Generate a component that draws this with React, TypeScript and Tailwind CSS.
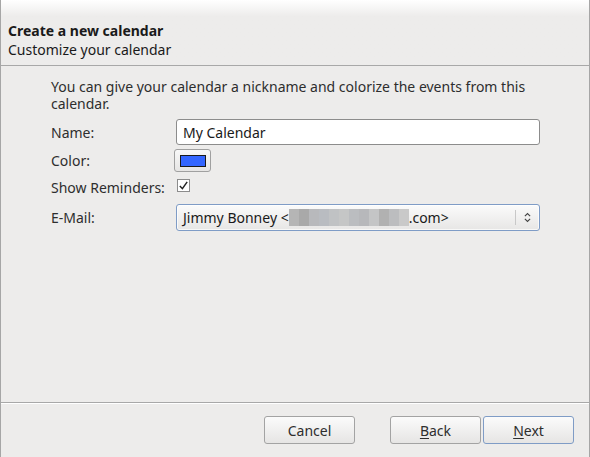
export default function App() {
  const font = { fontFamily: '"Noto Sans", "DejaVu Sans", sans-serif' };
  const blur = ["#b5b5b5", "#a9a9a9", "#b8b9bc", "#b9bcc1", "#c0c2c4", "#c5c6c6", "#bbbdc0", "#b7b8bb", "#c4c5c6", "#b1b1b1", "#bcbdbf", "#c9c9c9"];
  return (
    <div
      className="flex h-[457px] w-[590px] flex-col border-x border-[#a6a6a6] bg-[#edeceb] text-[14px] text-[#3c3c3c]"
      style={font}
    >
      <header className="h-[66px] border-b border-[#a8a8a8] bg-gradient-to-b from-[#ffffff] via-[#edeceb] via-[25%] to-[#edeceb] px-[7px] pt-[21px] leading-[19px] text-[#1a1a1a]">
        <div className="font-bold">Create a new calendar</div>
        <div>Customize your calendar</div>
      </header>

      <main className="flex-1 px-[50px] pt-[12px]">
        <p className="leading-[17px] text-[#2e2e2e]">
          You can give your calendar a nickname and colorize the events from this calendar.
        </p>
        <div className="mt-[7px] grid grid-cols-[125px_364px] items-center gap-y-[4px] text-[#2e2e2e]">
          <label>Name:</label>
          <div className="flex h-[26px] items-center rounded-[3px] border border-[#8c8c8c] bg-white px-[6px] text-[#1a1a1a]">
            My Calendar
          </div>
          <label>Color:</label>
          <div className="-ml-[2px] flex h-[23px] w-[37px] items-center justify-center rounded-[3px] border border-[#a0a0a0] bg-gradient-to-b from-[#f8f8f8] to-[#e6e5e4]">
            <div className="h-[12px] w-[26px] border border-[#1a1a1a] bg-[#3366ff]" />
          </div>
          <label className="self-start pt-[1px]">Show Reminders:</label>
          <div className="flex h-[24px] items-start pt-[3px]">
            <div className="ml-[1px] flex h-[13px] w-[13px] items-center justify-center border border-[#8c8c8c] bg-white">
              <svg viewBox="0 0 12 12" className="h-[11px] w-[11px]">
                <path d="M2 6.5 L4.8 9.5 L10 2" fill="none" stroke="#222" strokeWidth="1.6" />
              </svg>
            </div>
          </div>
          <label>E-Mail:</label>
          <div className="flex h-[27px] items-center rounded-[3px] border border-[#7f9cc6] bg-gradient-to-b from-[#fbfbfb] to-[#e7e6e5] pl-[6px] text-[#1a1a1a] shadow-[inset_0_0_0_1px_rgba(255,255,255,0.7)]">
            <span>Jimmy Bonney &lt;</span>
            <span className="flex h-[17px]">
              {blur.map((c, i) => (
                <span key={i} className="w-[10px]" style={{ backgroundColor: c }} />
              ))}
            </span>
            <span>.com&gt;</span>
            <span className="ml-auto flex h-full items-center">
              <span className="h-[15px] w-px bg-[#c8c8c8]" />
              <svg viewBox="0 0 8 12" className="mx-[8px] h-[11px] w-[7px]">
                <path d="M1 4.5 L4 1.5 L7 4.5 M1 7.5 L4 10.5 L7 7.5" fill="none" stroke="#444" strokeWidth="1.3" />
              </svg>
            </span>
          </div>
        </div>
      </main>

      <footer className="h-[55px] border-t border-[#a8a8a8] shadow-[inset_0_1px_0_#ffffff]">
        <div className="flex justify-end pr-[15px] pt-[13px] text-[#2e2e2e]">
          <button className="h-[28px] w-[91px] rounded-[3px] border border-[#a3a3a3] bg-gradient-to-b from-[#fbfbfb] to-[#e6e5e4]">
            Cancel
          </button>
          <button className="ml-[35px] h-[28px] w-[91px] rounded-[3px] border border-[#a3a3a3] bg-gradient-to-b from-[#fbfbfb] to-[#e6e5e4]">
            <span className="underline underline-offset-2">B</span>ack
          </button>
          <button className="ml-[2px] h-[28px] w-[91px] rounded-[3px] border border-[#7f9cc6] bg-gradient-to-b from-[#fbfbfb] to-[#e6e5e4]">
            <span className="underline underline-offset-2">N</span>ext
          </button>
        </div>
      </footer>
    </div>
  );
}
